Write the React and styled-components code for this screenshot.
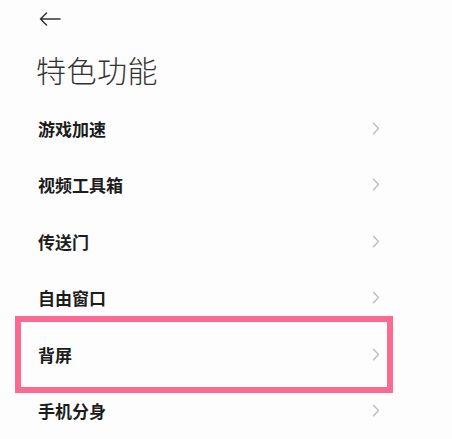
import React from "react";
import styled, { createGlobalStyle } from "styled-components";

const items = ["游戏加速", "视频工具箱", "传送门", "自由窗口", "背屏", "手机分身"];

function BackArrow() {
  return (
    <svg width="22" height="14" viewBox="0 0 22 14" fill="none">
      <path
        d="M21 7H1.5M7.5 1L1.5 7l6 6"
        stroke="#333"
        strokeWidth="1.5"
        strokeLinecap="round"
        strokeLinejoin="round"
      />
    </svg>
  );
}

function Chevron() {
  return (
    <svg width="8" height="13" viewBox="0 0 8 13" fill="none">
      <path
        d="M1.5 1.2L6.5 6.5L1.5 11.8"
        stroke="#bdbdbd"
        strokeWidth="1.3"
        strokeLinecap="round"
        strokeLinejoin="round"
      />
    </svg>
  );
}

export default function App() {
  return (
    <>
      <GlobalStyle />
      <Page>
        <Header>
          <BackArrow />
        </Header>
        <Title>特色功能</Title>
        <List>
          {items.map((label) => (
            <Row key={label}>
              {label === "背屏" && <Highlight />}
              <Label>{label}</Label>
              <Chevron />
            </Row>
          ))}
        </List>
      </Page>
    </>
  );
}

//styled components
const GlobalStyle = createGlobalStyle`
  html, body {
    margin: 0;
    background: #fdfdfd;
  }
  body {
    font-family: "Noto Sans CJK SC", "Noto Sans", sans-serif;
  }
`;

const Page = styled.div`
  width: 452px;
  height: 439px;
  overflow: hidden;
  display: flex;
  flex-direction: column;
`;

const Header = styled.div`
  height: 40px;
  padding-left: 39px;
  display: flex;
  align-items: center;
`;

const Title = styled.h1`
  margin: 0;
  padding-left: 36px;
  height: 68px;
  display: flex;
  align-items: center;
  font-size: 30px;
  font-weight: 300;
  color: #333;
  letter-spacing: 0.5px;
`;

const List = styled.div`
  display: flex;
  flex-direction: column;
`;

const Row = styled.div`
  position: relative;
  height: 56.5px;
  padding: 0 72px 0 38px;
  display: flex;
  align-items: center;
  justify-content: space-between;
`;

const Label = styled.span`
  font-size: 17px;
  font-weight: 700;
  color: #1c1c1c;
`;

const Highlight = styled.div`
  position: absolute;
  left: 15px;
  width: 378px;
  top: -10px;
  bottom: -10px;
  box-sizing: border-box;
  border: 6.5px solid #fb6a90;
  pointer-events: none;
`;
